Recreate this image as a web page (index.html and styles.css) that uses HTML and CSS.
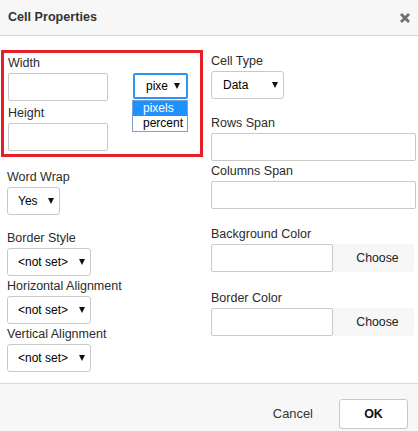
FILE: index.html
```html
<!DOCTYPE html>
<html lang="en">
<head>
<meta charset="utf-8">
<title>Cell Properties</title>
<link rel="stylesheet" href="styles.css">
</head>
<body>
<div class="dialog">
  <div class="header">
    <span class="title">Cell Properties</span>
    <svg class="close" width="10" height="10" viewBox="0 0 10 10" aria-label="Close"><path d="M1 1L9 9M9 1L1 9" stroke="#6f6f6f" stroke-width="2.8" stroke-linecap="butt"/></svg>
  </div>
  <div class="content">
    <div class="col col-left">
      <div class="highlight">
        <div class="size-row">
          <div class="field">
            <label class="label">Width</label>
            <div class="input w100"></div>
          </div>
          <div class="unit">
            <div class="select open"><span class="val">pixe</span><span class="arrow"></span></div>
            <ul class="list">
              <li class="opt active">pixels</li>
              <li class="opt">percent</li>
            </ul>
          </div>
        </div>
        <div class="field gap5">
          <label class="label">Height</label>
          <div class="input w100"></div>
        </div>
      </div>
      <div class="plain">
        <div class="field ww">
          <label class="label">Word Wrap</label>
          <div class="select s-yes"><span class="val">Yes</span><span class="arrow"></span></div>
        </div>
        <div class="field bs">
          <label class="label">Border Style</label>
          <div class="select s-ns"><span class="val">&lt;not set&gt;</span><span class="arrow"></span></div>
        </div>
        <div class="field g3">
          <label class="label">Horizontal Alignment</label>
          <div class="select s-ns"><span class="val">&lt;not set&gt;</span><span class="arrow"></span></div>
        </div>
        <div class="field g3">
          <label class="label">Vertical Alignment</label>
          <div class="select s-ns"><span class="val">&lt;not set&gt;</span><span class="arrow"></span></div>
        </div>
      </div>
    </div>
    <div class="col col-right">
      <div class="field">
        <label class="label">Cell Type</label>
        <div class="select s-data"><span class="val">Data</span><span class="arrow"></span></div>
      </div>
      <div class="field rs">
        <label class="label">Rows Span</label>
        <div class="input wfull"></div>
      </div>
      <div class="field g3">
        <label class="label">Columns Span</label>
        <div class="input wfull"></div>
      </div>
      <div class="field bg">
        <label class="label">Background Color</label>
        <div class="color-row"><div class="input wcolor"></div><div class="choose">Choose</div></div>
      </div>
      <div class="field bc">
        <label class="label">Border Color</label>
        <div class="color-row"><div class="input wcolor"></div><div class="choose">Choose</div></div>
      </div>
    </div>
  </div>
  <div class="footer">
    <span class="cancel">Cancel</span>
    <span class="ok">OK</span>
  </div>
</div>
</body>
</html>
```
FILE: styles.css
```css
* { box-sizing: border-box; }
html, body {
  margin: 0;
  padding: 0;
  background: #ffffff;
}
body {
  font-family: "Liberation Sans", Arial, sans-serif;
  color: #333;
  width: 418px;
  height: 431px;
  overflow: hidden;
}
.dialog {
  width: 418px;
  height: 431px;
  display: flex;
  flex-direction: column;
}
.header {
  height: 36px;
  background: #f7f7f7;
  border-bottom: 1px solid #d4d4d4;
  display: flex;
  align-items: center;
  justify-content: space-between;
  padding: 0 8px;
}
.title {
  font-size: 12.6px;
  font-weight: bold;
  color: #333;
  padding-bottom: 2px;
}
.close {
  display: block;
  margin-top: 1px;
}
.content {
  height: 347px;
  display: flex;
  padding-left: 1px;
}
.col-left {
  width: 202px;
  padding-top: 14px;
}
.col-right {
  width: 205px;
  margin-left: 8px;
  padding-top: 18px;
}
.highlight {
  border: 3px solid #e81f27;
  padding: 3px 4px 3px 4px;
  width: 202px;
}
.plain {
  padding-left: 6px;
  padding-top: 13px;
}
.field {
  display: flex;
  flex-direction: column;
  align-items: flex-start;
}
.label {
  display: block;
  font-size: 12.5px;
  line-height: 15px;
  height: 15px;
  margin-bottom: 2px;
  color: #2b2b2b;
  white-space: nowrap;
}
.gap5 { margin-top: 5px; }
.g3 { margin-top: 3px; }
.bs { margin-top: 16px; }
.rs { margin-top: 17px; }
.bg { margin-top: 18px; }
.bc { margin-top: 19px; }
.input {
  height: 28px;
  border: 1px solid #c8c8c8;
  border-radius: 2px;
  background: #fff;
}
.w100 { width: 100px; }
.wfull { width: 205px; }
.wcolor { width: 122px; }
.size-row {
  display: flex;
  align-items: flex-start;
}
.unit {
  position: relative;
  margin-left: 25px;
  margin-top: 17px;
}
.select {
  height: 28px;
  border: 1px solid #c8c8c8;
  border-radius: 3px;
  background: #fff;
  display: flex;
  align-items: center;
  padding-left: 10px;
  padding-right: 5px;
  font-size: 12px;
  color: #000;
}
.select .val {
  flex: 1;
  white-space: nowrap;
}
.arrow {
  width: 0;
  height: 0;
  border-left: 3px solid transparent;
  border-right: 3px solid transparent;
  border-top: 6px solid #111;
  flex: none;
}
.select.open {
  width: 55px;
  height: 26px;
  border: 2px solid #2b95f4;
  border-radius: 2px;
  padding-left: 11px;
  padding-right: 6px;
}
.select.open .val {
  flex: 1;
}
.s-yes { width: 53px; }
.s-ns { width: 84px; }
.s-data { width: 73px; padding-left: 11px; }
.list {
  position: absolute;
  left: -1px;
  top: 27px;
  width: 56px;
  margin: 0;
  padding: 0;
  list-style: none;
  border: 1px solid #7f9fd0;
  background: #fff;
  font-size: 12px;
  color: #000;
}
.opt {
  height: 15px;
  line-height: 15px;
  padding-left: 10px;
  white-space: nowrap;
}
.opt.active {
  background: #1e90ff;
  color: #fff;
}
.color-row {
  display: flex;
}
.choose {
  width: 81px;
  height: 28px;
  background: #f6f6f6;
  display: flex;
  align-items: center;
  justify-content: center;
  padding-left: 8px;
  font-size: 12.3px;
  color: #222;
  border-radius: 0 2px 2px 0;
}
.footer {
  flex: 1;
  background: #f7f7f7;
  border-top: 1px solid #d8d8d8;
  display: flex;
  justify-content: flex-end;
  align-items: flex-start;
  padding: 15px 10px 0 0;
}
.cancel {
  font-size: 12.9px;
  color: #333;
  line-height: 30px;
  margin-right: 26px;
}
.ok {
  width: 69px;
  height: 30px;
  background: #fff;
  border: 1px solid #c8c8c8;
  border-radius: 3px;
  font-size: 12.5px;
  font-weight: bold;
  color: #111;
  display: flex;
  align-items: center;
  justify-content: center;
}
```
